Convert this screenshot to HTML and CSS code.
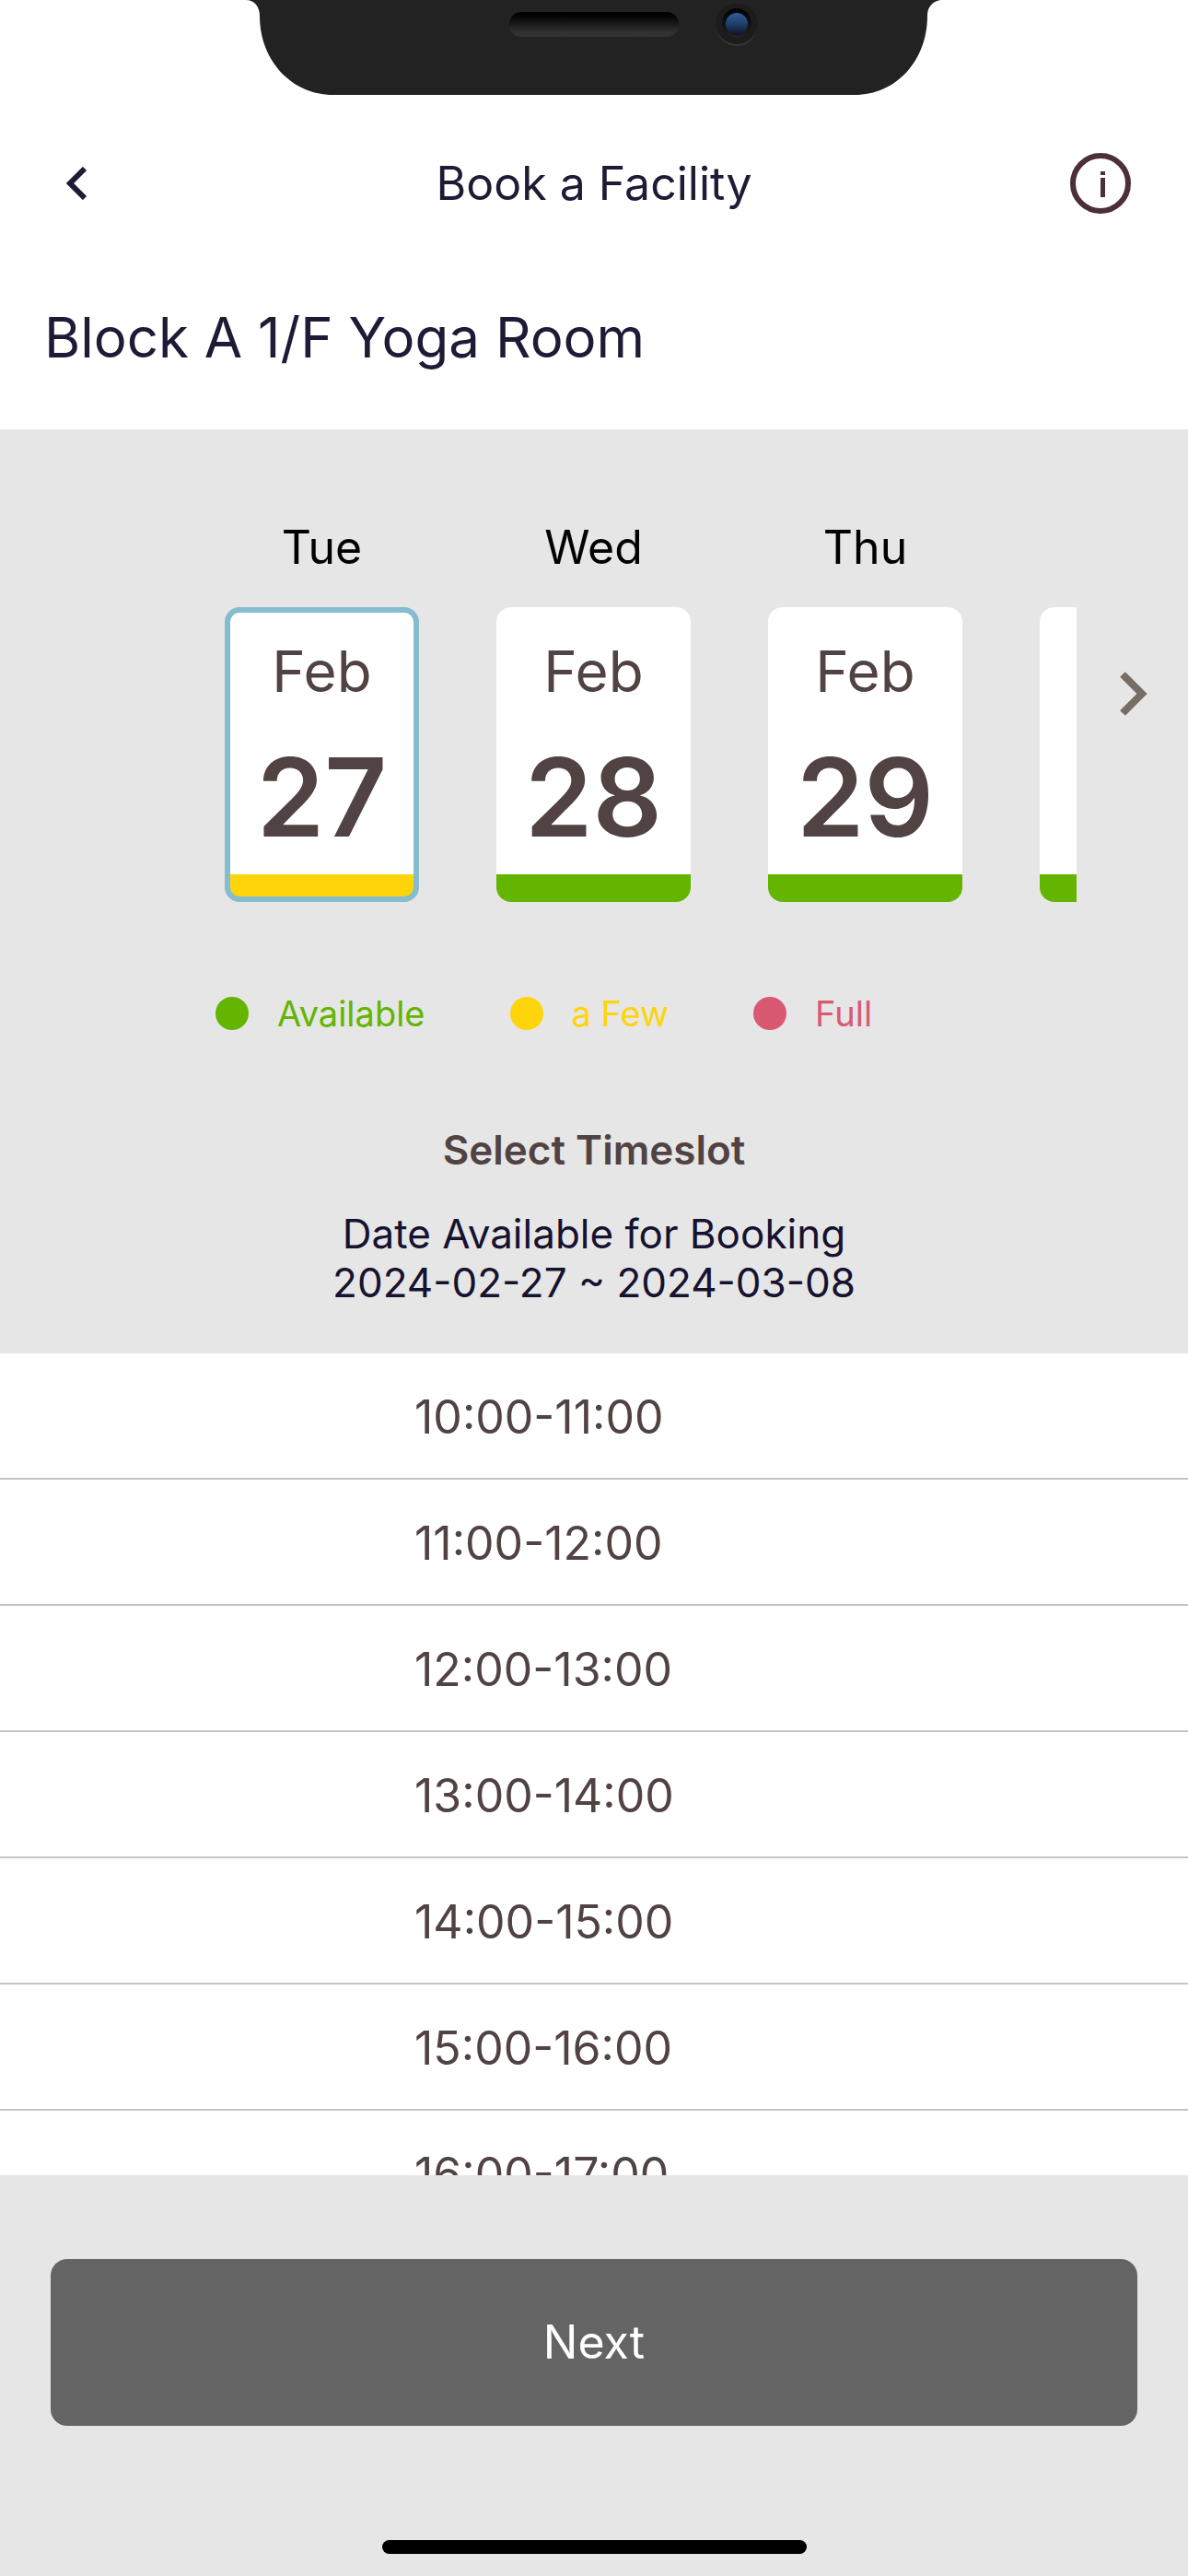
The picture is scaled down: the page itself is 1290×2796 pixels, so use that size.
FILE: index.html
```html
<!DOCTYPE html>
<html lang="en">
<head>
<meta charset="utf-8">
<meta name="viewport" content="width=device-width, initial-scale=1">
<title>Book a Facility</title>
<link rel="stylesheet" href="styles.css">
</head>
<body>
<div class="app">
  <svg class="notch" viewBox="0 0 760 106" aria-hidden="true">
    <defs>
      <linearGradient id="speaker" x1="0" y1="0" x2="0" y2="1">
        <stop offset="0.1" stop-color="#000"/>
        <stop offset="0.8" stop-color="#303030"/>
        <stop offset="1" stop-color="#333"/>
      </linearGradient>
      <linearGradient id="ring" x1="0" y1="0" x2="0" y2="1">
        <stop offset="0" stop-color="#0e0e0e"/>
        <stop offset="0.6" stop-color="#202020"/>
        <stop offset="1" stop-color="#3a3a3a"/>
      </linearGradient>
      <linearGradient id="well" x1="0" y1="0" x2="0" y2="1">
        <stop offset="0" stop-color="#000"/>
        <stop offset="1" stop-color="#222"/>
      </linearGradient>
      <linearGradient id="lens" x1="0" y1="0" x2="0" y2="1">
        <stop offset="0" stop-color="#2f5c98"/>
        <stop offset="0.5" stop-color="#213f6b"/>
        <stop offset="1" stop-color="#0b1426"/>
      </linearGradient>
    </defs>
    <path fill="#222" d="M2 0C11 0 17 7 17 17C17 66 52 103 97 103H663C708 103 742 66 742 17C742 7 749 0 758 0Z"/>
    <rect x="288" y="13" width="184" height="27" rx="13" fill="url(#speaker)"/>
    <circle cx="535" cy="27" r="23" fill="url(#ring)"/>
    <circle cx="535" cy="26" r="22" fill="#1c1c1c"/>
    <circle cx="535" cy="25" r="16" fill="url(#well)"/>
    <circle cx="535" cy="26" r="12" fill="url(#lens)"/>
  </svg>

  <header class="topbar">
    <button class="icon-button icon-button-start" type="button" aria-label="Back">
      <svg width="24" height="36" viewBox="0 0 24 36" aria-hidden="true"><path d="M20 2L4 18L20 34" fill="none" stroke="#1f1a35" stroke-width="6"/></svg>
    </button>
    <h1 class="topbar-title">Book a Facility</h1>
    <button class="icon-button" type="button" aria-label="Information">
      <svg width="66" height="66" viewBox="0 0 66 66" aria-hidden="true"><circle cx="33" cy="33" r="30" fill="none" stroke="#4c2f38" stroke-width="6"/><path d="M33 20h5v4h-5zM33 27h5v21h-5z" fill="#4c2f38"/></svg>
    </button>
  </header>

  <h2 class="facility">Block A 1/F Yoga Room</h2>

  <section class="picker">
    <div class="days">
      <div class="day-scroller">
        <div class="day">
          <span class="weekday">Tue</span>
          <button class="date few selected" type="button" aria-pressed="true"><span class="month">Feb</span><span class="number">27</span></button>
        </div>
        <div class="day">
          <span class="weekday">Wed</span>
          <button class="date" type="button" aria-pressed="false"><span class="month">Feb</span><span class="number">28</span></button>
        </div>
        <div class="day">
          <span class="weekday">Thu</span>
          <button class="date" type="button" aria-pressed="false"><span class="month">Feb</span><span class="number">29</span></button>
        </div>
        <div class="day">
          <button class="date" type="button" aria-pressed="false" aria-label="Friday"></button>
        </div>
      </div>
      <button class="next-days" type="button" aria-label="Later dates">
        <svg width="32" height="50" viewBox="0 0 32 50" aria-hidden="true"><path d="M4 4L25 25L4 46" fill="none" stroke="#786c66" stroke-width="8"/></svg>
      </button>
    </div>

    <ul class="legend">
      <li class="legend-item legend-available">Available</li>
      <li class="legend-item legend-few">a Few</li>
      <li class="legend-item legend-full">Full</li>
    </ul>

    <h3 class="timeslot-title">Select Timeslot</h3>
    <p class="range">Date Available for Booking<br>2024-02-27 ~ 2024-03-08</p>
  </section>

  <ul class="slots">
    <li><button class="slot" type="button"><span class="slot-time">10:00-11:00</span></button></li>
    <li><button class="slot" type="button"><span class="slot-time">11:00-12:00</span></button></li>
    <li><button class="slot" type="button"><span class="slot-time">12:00-13:00</span></button></li>
    <li><button class="slot" type="button"><span class="slot-time">13:00-14:00</span></button></li>
    <li><button class="slot" type="button"><span class="slot-time">14:00-15:00</span></button></li>
    <li><button class="slot" type="button"><span class="slot-time">15:00-16:00</span></button></li>
    <li><button class="slot" type="button"><span class="slot-time">16:00-17:00</span></button></li>
  </ul>

  <footer class="actions">
    <button class="next" type="button">Next</button>
    <div class="home-bar"></div>
  </footer>
</div>
</body>
</html>
```
FILE: styles.css
```css
* {
  box-sizing: border-box;
}

body {
  margin: 0;
  background: #fff;
  color: #514343;
  font-family: Inter, "Liberation Sans", sans-serif;
}

h1, h2, h3, p, ul {
  margin: 0;
  padding: 0;
  font-weight: 400;
  list-style: none;
}

button {
  border: 0;
  padding: 0;
  background: none;
  color: inherit;
  font: inherit;
}

svg {
  display: block;
}

.app {
  position: relative;
  display: flex;
  flex-direction: column;
  height: 100vh;
}

.notch {
  position: absolute;
  top: 0;
  left: calc(50% - 380px);
  width: 760px;
}

.topbar {
  display: grid;
  grid-template-columns: 66px 1fr 66px;
  align-items: center;
  padding: 166px 62px 0;
  color: #1f1a35;
}

.icon-button-start {
  padding-left: 10px;
}

.topbar-title {
  font-size: 50px;
  line-height: 66px;
  text-align: center;
}

.facility {
  padding: 94px 48px 60px;
  color: #1f1a35;
  font-size: 60px;
  line-height: 80px;
}

.picker {
  background: #e6e6e6;
}

.days {
  display: grid;
  grid-template-columns: 1fr 121px;
  align-items: center;
  padding-left: 121px;
}

.day-scroller {
  display: flex;
  align-items: flex-end;
  gap: 84px;
  padding: 98px 0 0 123px;
  overflow-x: auto;
  scrollbar-width: none;
}

.day {
  display: flex;
  flex: none;
  flex-direction: column;
  gap: 35px;
  width: 211px;
  text-align: center;
}

.weekday {
  color: #000;
  font-size: 50px;
  line-height: 60px;
}

.date {
  display: flex;
  flex-direction: column;
  height: 320px;
  padding-top: 24px;
  border-top: 6px solid #fff;
  border-bottom: 30px solid #63b500;
  border-radius: 16px;
  background: #fff;
}

.month {
  width: 100%;
  font-size: 62px;
  line-height: 80px;
}

.number {
  width: 100%;
  margin-top: 26px;
  font-size: 118px;
  font-weight: 600;
  line-height: 140px;
}

.date.selected {
  border: 6px solid #86bccf;
  background: linear-gradient(to top, #fed40a 24px, #fff 24px);
}

.next-days {
  justify-self: center;
  padding: 60px 0 0 3px;
}

.legend {
  display: flex;
  gap: 92px;
  padding: 96px 0 0 234px;
  font-size: 38px;
  line-height: 50px;
}

.legend-item {
  display: flex;
  align-items: center;
  gap: 31px;
}

.legend-item::before {
  width: 36px;
  height: 36px;
  border-radius: 50%;
  background: currentColor;
  content: "";
}

.legend-available {
  color: #63b500;
}

.legend-few {
  color: #fed40a;
}

.legend-full {
  color: #d95973;
}

.timeslot-title {
  padding-top: 93px;
  font-size: 44px;
  font-weight: 600;
  line-height: 60px;
  text-align: center;
}

.range {
  padding: 35px 0 50px;
  color: #16122f;
  font-size: 44px;
  line-height: 53px;
  text-align: center;
}

.slots {
  flex: 1;
  min-height: 0;
  overflow-y: auto;
  scrollbar-width: none;
}

.slot {
  display: block;
  width: 100%;
  padding-top: 4px;
  border-bottom: 2px solid #c4c4c4;
  font-size: 50px;
  line-height: 131px;
}

.slot-time {
  display: block;
  width: 390px;
  margin: 0 auto;
  text-align: left;
}

.actions {
  padding: 91px 55px 24px;
  background: #e6e6e6;
}

.next {
  display: block;
  width: 100%;
  border-radius: 18px;
  background: #646464;
  color: #fff;
  font-size: 50px;
  line-height: 181px;
}

.home-bar {
  width: 461px;
  height: 15px;
  margin: 124px auto 0;
  border-radius: 8px;
  background: #000;
}
```
